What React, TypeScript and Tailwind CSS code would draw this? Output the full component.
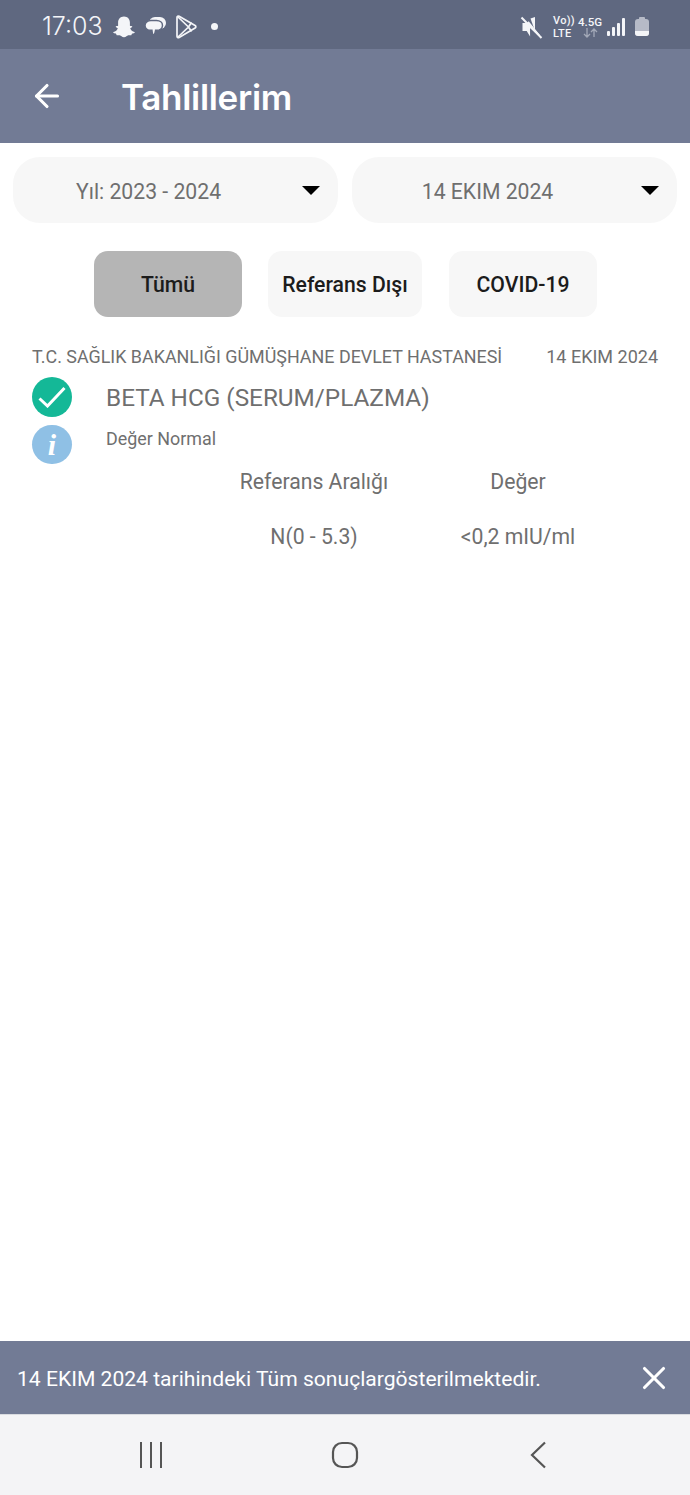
import React from 'react';
import { ArrowLeft, X } from 'lucide-react';

const roboto = { fontFamily: 'Roboto, sans-serif' };

function StatusBar() {
  return (
    <div className="h-[49px] bg-[#5f6880] flex items-center pt-[4px] pl-[42px] pr-[41px] text-[#f4f5f8] shrink-0">
      <span className="font-['Inter',sans-serif] text-[25px] leading-none font-light w-[62px]">17:03</span>
      <div className="flex items-center ml-[8px] gap-[8px]">
        <svg width="24" height="24" viewBox="0 0 24 24" fill="currentColor">
          <path d="M12 1.500c3.800 0 5.900 2.800 5.900 6v3.200c.8.500 2.200.200 2.400.800.300.800-1.700 1.300-2.100 1.700.500 1.800 2.300 3.400 4.300 3.900.500.200.300.800-.200 1-.800.400-2 .500-2.500.800-.300.400-.100 1.100-.600 1.300-.900.200-1.800-.200-3 .100-1.200.300-2.100 1.900-4.200 1.900s-3-1.600-4.200-1.900c-1.200-.300-2.100.100-3-.100-.500-.200-.300-.900-.600-1.300-.500-.300-1.700-.400-2.500-.800-.500-.200-.700-.800-.200-1 2-.500 3.800-2.100 4.300-3.900-.400-.400-2.400-.900-2.100-1.700.200-.600 1.600-.300 2.400-.800V7.500c0-3.200 2.100-6 5.900-6z" />
        </svg>
        <svg width="22" height="22" viewBox="0 0 22 22" fill="currentColor">
          <rect x="5" y="1" width="17" height="12" rx="6" />
          <path d="M7 4.500h5.500c3.400 0 6 2.100 6 4.900s-2.600 4.900-6 4.900h-.9c-.200 2-.900 4-2.200 5.700-.900-1.300-1.400-3.400-1.500-5.700H7c-3.400 0-6-2.100-6-4.900s2.600-4.900 6-4.900z" stroke="#5f6880" strokeWidth="1.500" />
        </svg>
        <svg width="24" height="26" viewBox="0 0 24 26" fill="none" stroke="currentColor" strokeWidth="1.700" strokeLinejoin="round">
          <path d="M3 3.500c0-1.200 1.100-1.800 2.100-1.200l16 9.300c1 .600 1 1.900 0 2.500l-16 9.300c-1 .600-2.100 0-2.100-1.200z" />
          <path d="M3.500 2.500 14.500 13 3.500 23.500M14.500 13 17.500 8.500M14.500 13 17.500 17.500" />
        </svg>
        <span className="size-[7px] rounded-full bg-[#f4f5f8] ml-[5px]" />
      </div>
      <div className="ml-auto flex items-center">
        <svg width="24" height="24" viewBox="0 0 24 24" fill="currentColor" className="mr-[9px]">
          <path d="M2.500 8h4.200l2-1.800 11 13.600v1.600L10 13l.100 8.500L6.700 16H2.500z" />
          <path d="M10.500 3.500 15 2v14z" />
          <path d="M1.500 2.500 21.500 23" stroke="currentColor" strokeWidth="2" />
        </svg>
        <div className="flex flex-col items-start font-['Roboto',sans-serif] font-medium text-[11px] tracking-[0.3px] leading-[13px] w-[25px]">
          <span>Vo))</span>
          <span>LTE</span>
        </div>
        <div className="flex flex-col items-center w-[24px] font-['Roboto',sans-serif] font-medium text-[11.500px] leading-[12px]">
          <span>4.5G</span>
          <svg width="15" height="10" viewBox="0 0 15 10" fill="none" stroke="#a3a9b8" strokeWidth="1.300">
            <path d="M4 0v9M1 6l3 3 3-3M11 9V1M8 4l3-3 3 3" />
          </svg>
        </div>
        <svg width="19" height="20" viewBox="0 0 19 20" fill="currentColor" className="ml-[5px]">
          <rect x="0" y="14" width="3" height="5" rx="1" />
          <rect x="5" y="10" width="3" height="9" rx="1" />
          <rect x="10" y="6" width="3" height="13" rx="1" />
          <rect x="15" y="1" width="3" height="18" rx="1" />
        </svg>
        <div className="ml-[9px] w-[14px] h-[17px] mt-[2px] rounded-[3px] bg-[#b6bac7] relative flex flex-col justify-end">
          <span className="absolute -top-[2px] left-[4px] w-[6px] h-[3px] bg-[#b6bac7] rounded-t-[1px]" />
          <div className="h-[5px] bg-[#f4f5f8] rounded-b-[3px]" />
        </div>
      </div>
    </div>
  );
}

function Dropdown({ label }: { label: string }) {
  return (
    <div className="flex-1 h-[66px] rounded-[27px] bg-[#f7f7f7] flex items-center relative">
      <span className="w-[271px] mr-[1px] pt-[3px] text-center text-[21.200px] text-[#6f6f6f] leading-none">{label}</span>
      <span className="ml-[17px] w-0 h-0 border-l-[9px] border-r-[9px] border-t-[9px] border-l-transparent border-r-transparent border-t-black" />
    </div>
  );
}

function Tab({ label, width, active }: { label: string; width: string; active?: boolean }) {
  return (
    <div className={`${width} h-[66px] pt-[2px] rounded-[14px] flex items-center justify-center text-[21.200px] font-medium text-[#1c1c1c] ${active ? 'bg-[#b5b5b5]' : 'bg-[#f7f7f7]'}`}>
      {label}
    </div>
  );
}

export default function App() {
  return (
    <div className="h-[1495px] w-[690px] flex flex-col bg-white overflow-hidden" style={roboto}>
      <StatusBar />

      <header className="h-[94px] bg-[#727b95] flex items-center pl-[29px] text-white shrink-0">
        <ArrowLeft className="w-[36px] h-[36px]" strokeWidth={2.100} />
        <h1 className="ml-[56px] pt-[3px] font-['Inter',sans-serif] text-[35px] font-semibold leading-none tracking-[-0.3px]">Tahlillerim</h1>
      </header>

      <div className="flex gap-[14px] px-[13px] mt-[14px]">
        <Dropdown label="Yıl: 2023 - 2024" />
        <Dropdown label="14 EKIM 2024" />
      </div>

      <div className="flex gap-[26px] mt-[28px] pl-[94px]">
        <Tab label="Tümü" width="w-[148px]" active />
        <Tab label="Referans Dışı" width="w-[154px]" />
        <Tab label="COVID-19" width="w-[148px] ml-[1px]" />
      </div>

      <div className="px-[32px] mt-[29px]">
        <div className="flex justify-between text-[#6f6f6f] leading-[22px]">
          <span className="text-[17.900px]">T.C. SAĞLIK BAKANLIĞI GÜMÜŞHANE DEVLET HASTANESİ</span>
          <span className="text-[18px]">14 EKIM 2024</span>
        </div>
        <div className="flex mt-[9px]">
          <div className="flex flex-col gap-[8px] w-[74px]">
            <div className="size-[40px] rounded-full bg-[#14b897] flex items-center justify-center">
              <svg width="28" height="22" viewBox="0 0 28 22" fill="none" stroke="white" strokeWidth="3">
                <path d="M1.500 12.500 9.500 20 26.500 2" />
              </svg>
            </div>
            <div className="w-[40px] h-[39px] rounded-full bg-[#8fc0e5] flex items-center justify-center">
              <span className="font-['Liberation_Serif',serif] italic font-bold text-white text-[30px] leading-none">i</span>
            </div>
          </div>
          <div>
            <div className="pt-[1px] text-[24.300px] text-[#6f6f6f] leading-[40px]">BETA HCG (SERUM/PLAZMA)</div>
            <div className="text-[17.900px] text-[#6f6f6f] leading-[22px] mt-[10px]">Değer Normal</div>
          </div>
        </div>
        <div className="grid grid-cols-[208px_200px] ml-[178px] mt-[2px] text-[21.200px] text-[#6f6f6f] text-center">
          <div className="leading-[32px]">Referans Aralığı</div>
          <div className="leading-[32px]">Değer</div>
          <div className="leading-[32px] mt-[23px]">N(0 - 5.3)</div>
          <div className="leading-[32px] mt-[23px]">&lt;0,2 mIU/ml</div>
        </div>
      </div>

      <div className="mt-auto h-[73px] bg-[#727b95] flex items-center pl-[17px] pr-[17px] text-white shrink-0">
        <span className="pt-[2px] text-[21.100px] leading-none">14 EKIM 2024 tarihindeki Tüm sonuçlargösterilmektedir.</span>
        <X className="ml-auto w-[38px] h-[38px]" strokeWidth={2} />
      </div>

      <nav className="h-[81px] bg-[#f4f4f6] border-t border-[#d9dbe0] flex items-center pl-[138px] shrink-0 text-[#555]">
        <svg width="26" height="26" viewBox="0 0 26 26" stroke="currentColor" strokeWidth="2">
          <path d="M3 0v26M13 0v26M23 0v26" />
        </svg>
        <svg width="28" height="28" viewBox="0 0 28 28" fill="none" stroke="currentColor" strokeWidth="2.200" className="ml-[167px]">
          <rect x="2" y="2" width="24" height="24" rx="9" />
        </svg>
        <svg width="18" height="28" viewBox="0 0 18 28" fill="none" stroke="currentColor" strokeWidth="2.200" className="ml-[170px]">
          <path d="M16 1.500 3 14l13 12.500" />
        </svg>
      </nav>
    </div>
  );
}
